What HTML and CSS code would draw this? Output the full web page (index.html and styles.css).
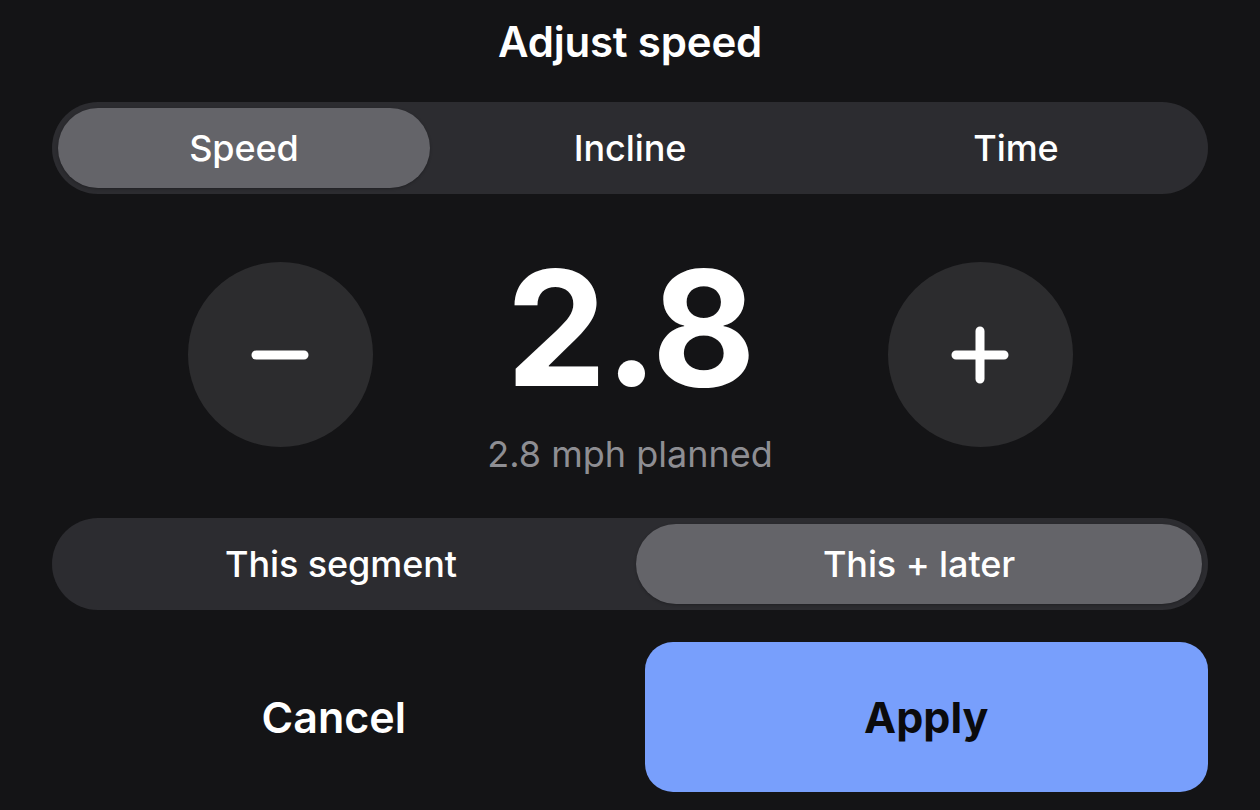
FILE: index.html
```html
<!DOCTYPE html>
<html lang="en">
<head>
<meta charset="utf-8">
<title>Adjust speed</title>
<link rel="stylesheet" href="styles.css">
</head>
<body>
<main class="sheet">
  <h1 class="title">Adjust speed</h1>

  <div class="seg seg-3" role="tablist">
    <button class="seg-item is-active">Speed</button>
    <button class="seg-item">Incline</button>
    <button class="seg-item">Time</button>
  </div>

  <div class="stepper">
    <button class="step-btn" aria-label="Decrease">
      <svg width="60" height="60" viewBox="0 0 60 60"><path d="M6 30 H54" stroke="#fff" stroke-width="9" stroke-linecap="round"/></svg>
    </button>
    <div class="value">
      <div class="value-num">2.8</div>
      <div class="value-sub">2.8 mph planned</div>
    </div>
    <button class="step-btn" aria-label="Increase">
      <svg width="60" height="60" viewBox="0 0 60 60"><path d="M6 30 H54 M30 6 V54" stroke="#fff" stroke-width="9" stroke-linecap="round"/></svg>
    </button>
  </div>

  <div class="seg seg-2" role="tablist">
    <button class="seg-item">This segment</button>
    <button class="seg-item is-active">This + later</button>
  </div>

  <div class="actions">
    <button class="btn btn-cancel">Cancel</button>
    <button class="btn btn-apply">Apply</button>
  </div>
</main>
</body>
</html>
```

FILE: styles.css
```css
* { box-sizing: border-box; }
html, body {
  margin: 0;
  padding: 0;
  background: #141416;
  width: 1260px;
  height: 810px;
  overflow: hidden;
}
body {
  font-family: Inter, "Noto Sans", "Liberation Sans", sans-serif;
  color: #fff;
}
button {
  font-family: inherit;
  border: 0;
  background: none;
  color: inherit;
  padding: 0;
  margin: 0;
}
.sheet {
  padding: 0 52px;
  display: flex;
  flex-direction: column;
}
.title {
  margin: 0;
  height: 86px;
  padding-top: 16px;
  text-align: center;
  font-size: 42px;
  font-weight: 600;
  line-height: 52px;
  letter-spacing: -0.2px;
}
.seg {
  display: grid;
  background: #2c2c30;
  border-radius: 46px;
  padding: 6px;
  height: 92px;
}
.seg-3 {
  margin-top: 16px;
  grid-template-columns: repeat(3, 1fr);
  column-gap: 14px;
}
.seg-2 {
  margin-top: 42px;
  grid-template-columns: repeat(2, 1fr);
  column-gap: 12px;
}
.seg-item {
  border-radius: 40px;
  font-size: 36px;
  font-weight: 500;
  color: #fff;
  display: flex;
  align-items: center;
  justify-content: center;
  letter-spacing: -0.1px;
}
.seg-item.is-active {
  background: #646469;
  box-shadow: 0 1px 3px rgba(0,0,0,0.25);
}
.stepper {
  margin-top: 68px;
  display: flex;
  justify-content: center;
  align-items: flex-start;
  height: 214px;
}
.step-btn {
  width: 185px;
  height: 185px;
  border-radius: 50%;
  background: #2c2c2e;
  display: flex;
  align-items: center;
  justify-content: center;
  flex: none;
}
.value {
  width: 515px;
  display: flex;
  flex-direction: column;
  align-items: center;
}
.value-num {
  font-size: 160px;
  font-weight: 700;
  line-height: 120px;
  letter-spacing: -2px;
  margin-top: 6px;
}
.value-sub {
  margin-top: 46px;
  font-size: 36px;
  font-weight: 400;
  color: #8e8e93;
  line-height: 40px;
}
.actions {
  margin-top: 32px;
  display: grid;
  grid-template-columns: 1fr 1fr;
  column-gap: 29px;
  height: 150px;
}
.btn {
  font-size: 43px;
  font-weight: 700;
  display: flex;
  align-items: center;
  justify-content: center;
  border-radius: 28px;
}
.btn-cancel { color: #fff; font-weight: 600; }
.btn-apply {
  background: #789ffc;
  color: #0b0b0d;
}
```
